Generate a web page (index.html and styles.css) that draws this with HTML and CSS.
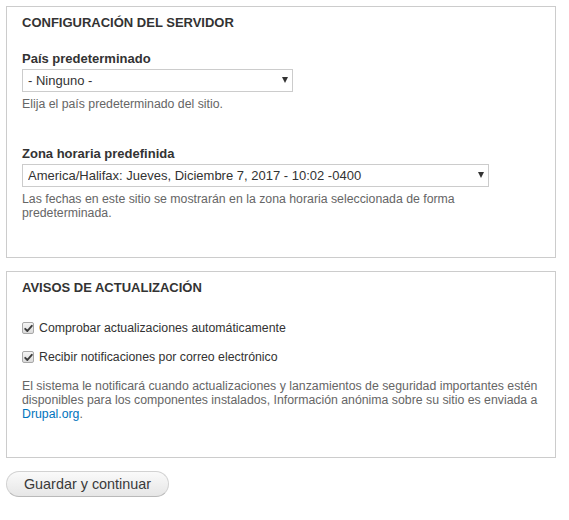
FILE: index.html
```html
<!DOCTYPE html>
<html lang="es">
<head>
<meta charset="utf-8">
<title>Configuración del sitio</title>
<link rel="stylesheet" href="styles.css">
</head>
<body>
<form class="page">
  <section class="box box-server">
    <h2 class="legend">Configuración del servidor</h2>
    <div class="field">
      <label class="label" for="pais">País predeterminado</label>
      <div class="select-wrap select-short">
        <select id="pais" class="select"><option>- Ninguno -</option></select>
      </div>
      <div class="desc">Elija el país predeterminado del sitio.</div>
    </div>
    <div class="field field-tz">
      <label class="label" for="zona">Zona horaria predefinida</label>
      <div class="select-wrap select-long">
        <select id="zona" class="select"><option>America/Halifax: Jueves, Diciembre 7, 2017 - 10:02 -0400</option></select>
      </div>
      <div class="desc">Las fechas en este sitio se mostrarán en la zona horaria seleccionada de forma predeterminada.</div>
    </div>
  </section>

  <section class="box box-updates">
    <h2 class="legend">Avisos de actualización</h2>
    <div class="check-row">
      <span class="check"><svg width="13" height="13" viewBox="0 0 13 13"><path d="M3.2 6.8 L5.4 9 L9.8 3.8" fill="none" stroke="#3c3c3c" stroke-width="1.9" stroke-linecap="round" stroke-linejoin="round"/></svg></span>
      <span class="check-label">Comprobar actualizaciones automáticamente</span>
    </div>
    <div class="check-row">
      <span class="check"><svg width="13" height="13" viewBox="0 0 13 13"><path d="M3.2 6.8 L5.4 9 L9.8 3.8" fill="none" stroke="#3c3c3c" stroke-width="1.9" stroke-linecap="round" stroke-linejoin="round"/></svg></span>
      <span class="check-label">Recibir notificaciones por correo electrónico</span>
    </div>
    <div class="desc desc-updates">El sistema le notificará cuando actualizaciones y lanzamientos de seguridad importantes estén disponibles para los componentes instalados, Información anónima sobre su sitio es enviada a <a href="#" class="link">Drupal.org</a>.</div>
  </section>

  <div class="actions">
    <button type="button" class="button">Guardar y continuar</button>
  </div>
</form>
</body>
</html>
```

FILE: styles.css
```css
html, body {
  margin: 0;
  padding: 0;
  background: #fff;
}
body {
  font-family: "Liberation Sans", Arial, sans-serif;
  color: #333;
  font-size: 13px;
}
.page {
  padding: 6px 0 0 6px;
  width: 550px;
}
.box {
  border: 1px solid #ccc;
  padding: 8px 15px 0 15px;
  box-sizing: border-box;
}
.box-server {
  height: 252px;
}
.box-updates {
  margin-top: 13px;
  height: 187px;
}
.legend {
  margin: 0;
  font-size: 13px;
  line-height: 16px;
  font-weight: bold;
  text-transform: uppercase;
  color: #333;
}
.field {
  margin-top: 20px;
}
.field-tz {
  margin-top: 35px;
}
.label {
  display: block;
  font-weight: bold;
  font-size: 13px;
  line-height: 16px;
  margin-bottom: 2px;
  color: #333;
}
.select-wrap {
  position: relative;
}
.select-short { width: 271px; }
.select-long { width: 467px; }
.select-wrap::after {
  content: "";
  position: absolute;
  right: 5px;
  top: 8px;
  border-left: 3.5px solid transparent;
  border-right: 3.5px solid transparent;
  border-top: 6px solid #333;
}
.select {
  -webkit-appearance: none;
  appearance: none;
  display: block;
  width: 100%;
  height: 23px;
  margin: 0;
  padding: 0 20px 0 5px;
  border: 1px solid #ccc;
  border-radius: 0;
  background: #fff;
  font-family: "Liberation Sans", Arial, sans-serif;
  font-size: 13px;
  color: #333;
  box-sizing: border-box;
}
.desc {
  margin-top: 5px;
  font-size: 12.3px;
  line-height: 14px;
  color: #666;
}
.check-row {
  display: flex;
  align-items: center;
  gap: 5px;
  height: 16px;
}
.box-updates .legend + .check-row {
  margin-top: 24px;
}
.check-row + .check-row {
  margin-top: 13px;
}
.check {
  display: block;
  flex: none;
  width: 12px;
  height: 12px;
  box-sizing: border-box;
  border: 1px solid #a8a8a8;
  border-radius: 2px;
  background: linear-gradient(#f5f5f5, #dadada);
  position: relative;
}
.check svg {
  position: absolute;
  left: -1px;
  top: -1px;
}
.check-label {
  font-size: 12.3px;
  line-height: 16px;
  color: #333;
}
.desc.desc-updates {
  margin-top: 14px;
}
.link {
  color: #0074bd;
  text-decoration: none;
}
.actions {
  margin-top: 13px;
}
.button {
  display: block;
  height: 26px;
  width: 163px;
  padding: 0;
  border: 1px solid #d2d2d2;
  border-bottom-color: #b9b9b9;
  border-radius: 13px;
  background: linear-gradient(#fafafa, #e6e6e6);
  font-family: "Liberation Sans", Arial, sans-serif;
  font-size: 14.4px;
  color: #3a3a3a;
  box-sizing: border-box;
  cursor: pointer;
}
```
